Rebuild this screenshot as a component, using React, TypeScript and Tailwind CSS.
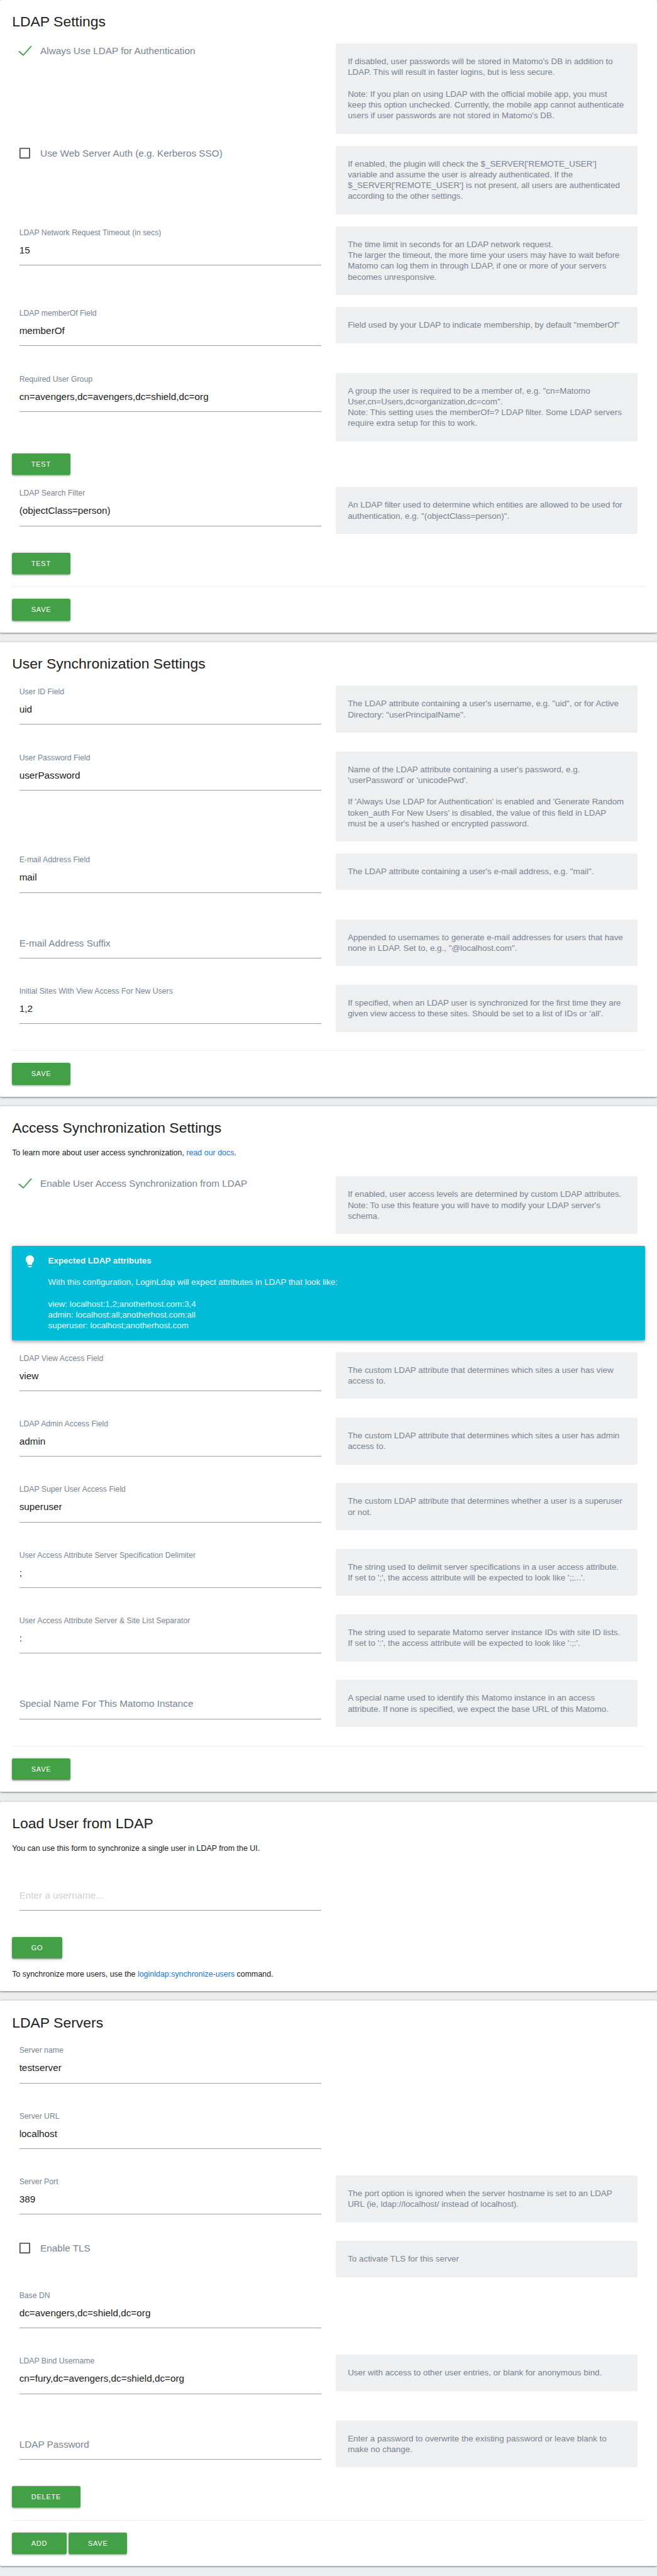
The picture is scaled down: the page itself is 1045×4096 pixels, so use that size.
import type { ReactNode } from 'react';

function Card({ title, children }: { title: string; children: ReactNode }) {
  return (
    <section className="rounded-[3px] bg-white p-5 shadow-[0_2px_2px_0_rgba(0,0,0,0.14),0_3px_1px_-2px_rgba(0,0,0,0.12),0_1px_5px_0_rgba(0,0,0,0.2)]">
      <h2 className="text-[24px] leading-8 text-[#212121]">{title}</h2>
      {children}
    </section>
  );
}

function Rows({ children, className = 'mt-5' }: { children: ReactNode; className?: string }) {
  return <div className={`flex flex-col gap-5 ${className}`}>{children}</div>;
}

function Row({ help, children }: { help?: string; children: ReactNode }) {
  return (
    <div className="flex items-start">
      <div className="w-1/2 px-3">{children}</div>
      <div className="w-1/2 px-3">
        {help && (
          <div className="rounded-[3px] bg-[#eeeff1] px-5 py-[21px] text-[14px] leading-[18px] whitespace-pre text-[#778492]">
            {help}
          </div>
        )}
      </div>
    </div>
  );
}

type FieldProps = { label?: string; value?: string; placeholder?: string; empty?: string; help?: string };

function Field({ label, value, placeholder, empty, help }: FieldProps) {
  return (
    <Row help={help}>
      <div className="h-[89px]">
        <div className="h-[21px] text-[12.8px] leading-[22.4px] whitespace-nowrap text-[#778492]">{label}</div>
        <div className="h-[43px] text-[16px] leading-[37px] whitespace-nowrap text-[#212121]">
          {value}
          {empty && <span className="text-[#778492]">{empty}</span>}
          {placeholder && <span className="text-[#d1d1d1]">{placeholder}</span>}
        </div>
        <div className="h-px bg-[#9e9e9e]" />
      </div>
    </Row>
  );
}

function Check({ label, checked, help }: { label: string; checked?: boolean; help: string }) {
  return (
    <Row help={help}>
      <div className="flex items-start">
        <svg className="-ml-1 mt-[1px] h-[24px] w-[26px] shrink-0" viewBox="0 0 26 24" fill="none">
          {checked ? (
            <path d="M3 12 L10.5 18.6 L24 3.2" stroke="#43a047" strokeWidth="1.9" />
          ) : (
            <rect x="5" y="3" width="16" height="16" rx="0.4" stroke="#5a5a5a" strokeWidth="2" />
          )}
        </svg>
        <span className="ml-[13px] text-[16px] leading-[25px] whitespace-nowrap text-[#778492]">{label}</span>
      </div>
    </Row>
  );
}

function Button({ children }: { children: string }) {
  return (
    <button className="h-9 rounded-[3px] bg-[#43a047] px-8 text-[11.5px] leading-9 tracking-[0.8px] text-white uppercase shadow-[0_2px_2px_0_rgba(0,0,0,0.14),0_3px_1px_-2px_rgba(0,0,0,0.12),0_1px_5px_0_rgba(0,0,0,0.2)]">
      {children}
    </button>
  );
}

function Actions({ children }: { children: ReactNode }) {
  return <div className="flex gap-[3.6px]">{children}</div>;
}

function Rule() {
  return <div className="h-px bg-[#eeeeee]" />;
}

function Note({ children, className = '-mb-px' }: { children: ReactNode; className?: string }) {
  return <p className={`mt-4 text-[13px] leading-5 text-[#212121] ${className}`}>{children}</p>;
}

function Link({ children }: { children: string }) {
  return <a className="text-[#1976d2]">{children}</a>;
}

function Notice() {
  return (
    <div className="flex rounded-[2px] bg-[#00bcd7] py-[15px] pl-[18px] text-[14px] leading-[18px] text-white/90 shadow-[0_4px_5px_0_rgba(0,0,0,0.14),0_1px_10px_0_rgba(0,0,0,0.12),0_2px_4px_-1px_rgba(0,0,0,0.2)]">
      <svg className="-mt-[2px] h-6 w-6 shrink-0 fill-white/95" viewBox="0 0 24 24">
        <path d="M9 21c0 .55.45 1 1 1h4c.55 0 1-.45 1-1v-1H9v1zm3-19C8.14 2 5 5.14 5 9c0 2.38 1.19 4.47 3 5.74V17c0 .55.45 1 1 1h6c.55 0 1-.45 1-1v-2.26c1.81-1.27 3-3.36 3-5.74 0-3.86-3.14-7-7-7z" />
      </svg>
      <div className="ml-[18px]">
        <strong className="block font-bold text-white/95">Expected LDAP attributes</strong>
        <p className="mt-[18px]">With this configuration, LoginLdap will expect attributes in LDAP that look like:</p>
        <p className="mt-[18px] whitespace-pre">
          {'view: localhost:1,2;anotherhost.com:3,4\nadmin: localhost:all;anotherhost.com:all\nsuperuser: localhost;anotherhost.com'}
        </p>
      </div>
    </div>
  );
}

export default function App() {
  return (
    <main className="flex h-[4279px] w-full flex-col gap-4 overflow-hidden bg-[#edeef0] font-['Liberation_Sans',Arial,sans-serif] [zoom:0.9572]">
      <Card title="LDAP Settings">
        <Rows>
          <Check
            checked
            label="Always Use LDAP for Authentication"
            help={"If disabled, user passwords will be stored in Matomo's DB in addition to\nLDAP. This will result in faster logins, but is less secure.\n\nNote: If you plan on using LDAP with the official mobile app, you must\nkeep this option unchecked. Currently, the mobile app cannot authenticate\nusers if user passwords are not stored in Matomo's DB."}
          />
          <Check
            label="Use Web Server Auth (e.g. Kerberos SSO)"
            help={"If enabled, the plugin will check the $_SERVER['REMOTE_USER']\nvariable and assume the user is already authenticated. If the\n$_SERVER['REMOTE_USER'] is not present, all users are authenticated\naccording to the other settings."}
          />
          <Field
            label="LDAP Network Request Timeout (in secs)"
            value="15"
            help={'The time limit in seconds for an LDAP network request.\nThe larger the timeout, the more time your users may have to wait before\nMatomo can log them in through LDAP, if one or more of your servers\nbecomes unresponsive.'}
          />
          <Field
            label="LDAP memberOf Field"
            value="memberOf"
            help={'Field used by your LDAP to indicate membership, by default "memberOf"'}
          />
          <Field
            label="Required User Group"
            value="cn=avengers,dc=avengers,dc=shield,dc=org"
            help={'A group the user is required to be a member of, e.g. "cn=Matomo\nUser,cn=Users,dc=organization,dc=com".\nNote: This setting uses the memberOf=? LDAP filter. Some LDAP servers\nrequire extra setup for this to work.'}
          />
          <Actions>
            <Button>Test</Button>
          </Actions>
          <Field
            label="LDAP Search Filter"
            value="(objectClass=person)"
            help={'An LDAP filter used to determine which entities are allowed to be used for\nauthentication, e.g. "(objectClass=person)".'}
          />
          <Actions>
            <Button>Test</Button>
          </Actions>
          <Rule />
          <Actions>
            <Button>Save</Button>
          </Actions>
        </Rows>
      </Card>

      <Card title="User Synchronization Settings">
        <Rows>
          <Field
            label="User ID Field"
            value="uid"
            help={'The LDAP attribute containing a user\'s username, e.g. "uid", or for Active\nDirectory: "userPrincipalName".'}
          />
          <Field
            label="User Password Field"
            value="userPassword"
            help={"Name of the LDAP attribute containing a user's password, e.g.\n'userPassword' or 'unicodePwd'.\n\nIf 'Always Use LDAP for Authentication' is enabled and 'Generate Random\ntoken_auth For New Users' is disabled, the value of this field in LDAP\nmust be a user's hashed or encrypted password."}
          />
          <Field
            label="E-mail Address Field"
            value="mail"
            help={'The LDAP attribute containing a user\'s e-mail address, e.g. "mail".'}
          />
          <Field
            empty="E-mail Address Suffix"
            help={'Appended to usernames to generate e-mail addresses for users that have\nnone in LDAP. Set to, e.g., "@localhost.com".'}
          />
          <Field
            label="Initial Sites With View Access For New Users"
            value="1,2"
            help={"If specified, when an LDAP user is synchronized for the first time they are\ngiven view access to these sites. Should be set to a list of IDs or 'all'."}
          />
          <Rule />
          <Actions>
            <Button>Save</Button>
          </Actions>
        </Rows>
      </Card>

      <Card title="Access Synchronization Settings">
        <Note>
          To learn more about user access synchronization, <Link>read our docs</Link>.
        </Note>
        <Rows className="mt-[29px]">
          <Check
            checked
            label="Enable User Access Synchronization from LDAP"
            help={"If enabled, user access levels are determined by custom LDAP attributes.\nNote: To use this feature you will have to modify your LDAP server's\nschema."}
          />
          <Notice />
          <Field
            label="LDAP View Access Field"
            value="view"
            help={'The custom LDAP attribute that determines which sites a user has view\naccess to.'}
          />
          <Field
            label="LDAP Admin Access Field"
            value="admin"
            help={'The custom LDAP attribute that determines which sites a user has admin\naccess to.'}
          />
          <Field
            label="LDAP Super User Access Field"
            value="superuser"
            help={'The custom LDAP attribute that determines whether a user is a superuser\nor not.'}
          />
          <Field
            label="User Access Attribute Server Specification Delimiter"
            value=";"
            help={"The string used to delimit server specifications in a user access attribute.\nIf set to ';', the access attribute will be expected to look like ';;...'."}
          />
          <Field
            label="User Access Attribute Server & Site List Separator"
            value=":"
            help={"The string used to separate Matomo server instance IDs with site ID lists.\nIf set to ':', the access attribute will be expected to look like ':;:'."}
          />
          <Field
            empty="Special Name For This Matomo Instance"
            help={'A special name used to identify this Matomo instance in an access\nattribute. If none is specified, we expect the base URL of this Matomo.'}
          />
          <Rule />
          <Actions>
            <Button>Save</Button>
          </Actions>
        </Rows>
      </Card>

      <Card title="Load User from LDAP">
        <Note>You can use this form to synchronize a single user in LDAP from the UI.</Note>
        <Rows className="mt-[29px]">
          <Field placeholder="Enter a username..." />
          <Actions>
            <Button>Go</Button>
          </Actions>
        </Rows>
        <Note className="-mb-[2px]">
          To synchronize more users, use the <Link>loginldap:synchronize-users</Link> command.
        </Note>
      </Card>

      <Card title="LDAP Servers">
        <Rows>
          <Field label="Server name" value="testserver" />
          <Field label="Server URL" value="localhost" />
          <Field
            label="Server Port"
            value="389"
            help={'The port option is ignored when the server hostname is set to an LDAP\nURL (ie, ldap://localhost/ instead of localhost).'}
          />
          <Check label="Enable TLS" help="To activate TLS for this server" />
          <Field label="Base DN" value="dc=avengers,dc=shield,dc=org" />
          <Field
            label="LDAP Bind Username"
            value="cn=fury,dc=avengers,dc=shield,dc=org"
            help="User with access to other user entries, or blank for anonymous bind."
          />
          <Field
            empty="LDAP Password"
            help={'Enter a password to overwrite the existing password or leave blank to\nmake no change.'}
          />
          <Actions>
            <Button>Delete</Button>
          </Actions>
          <Rule />
          <Actions>
            <Button>Add</Button>
            <Button>Save</Button>
          </Actions>
        </Rows>
      </Card>
    </main>
  );
}
